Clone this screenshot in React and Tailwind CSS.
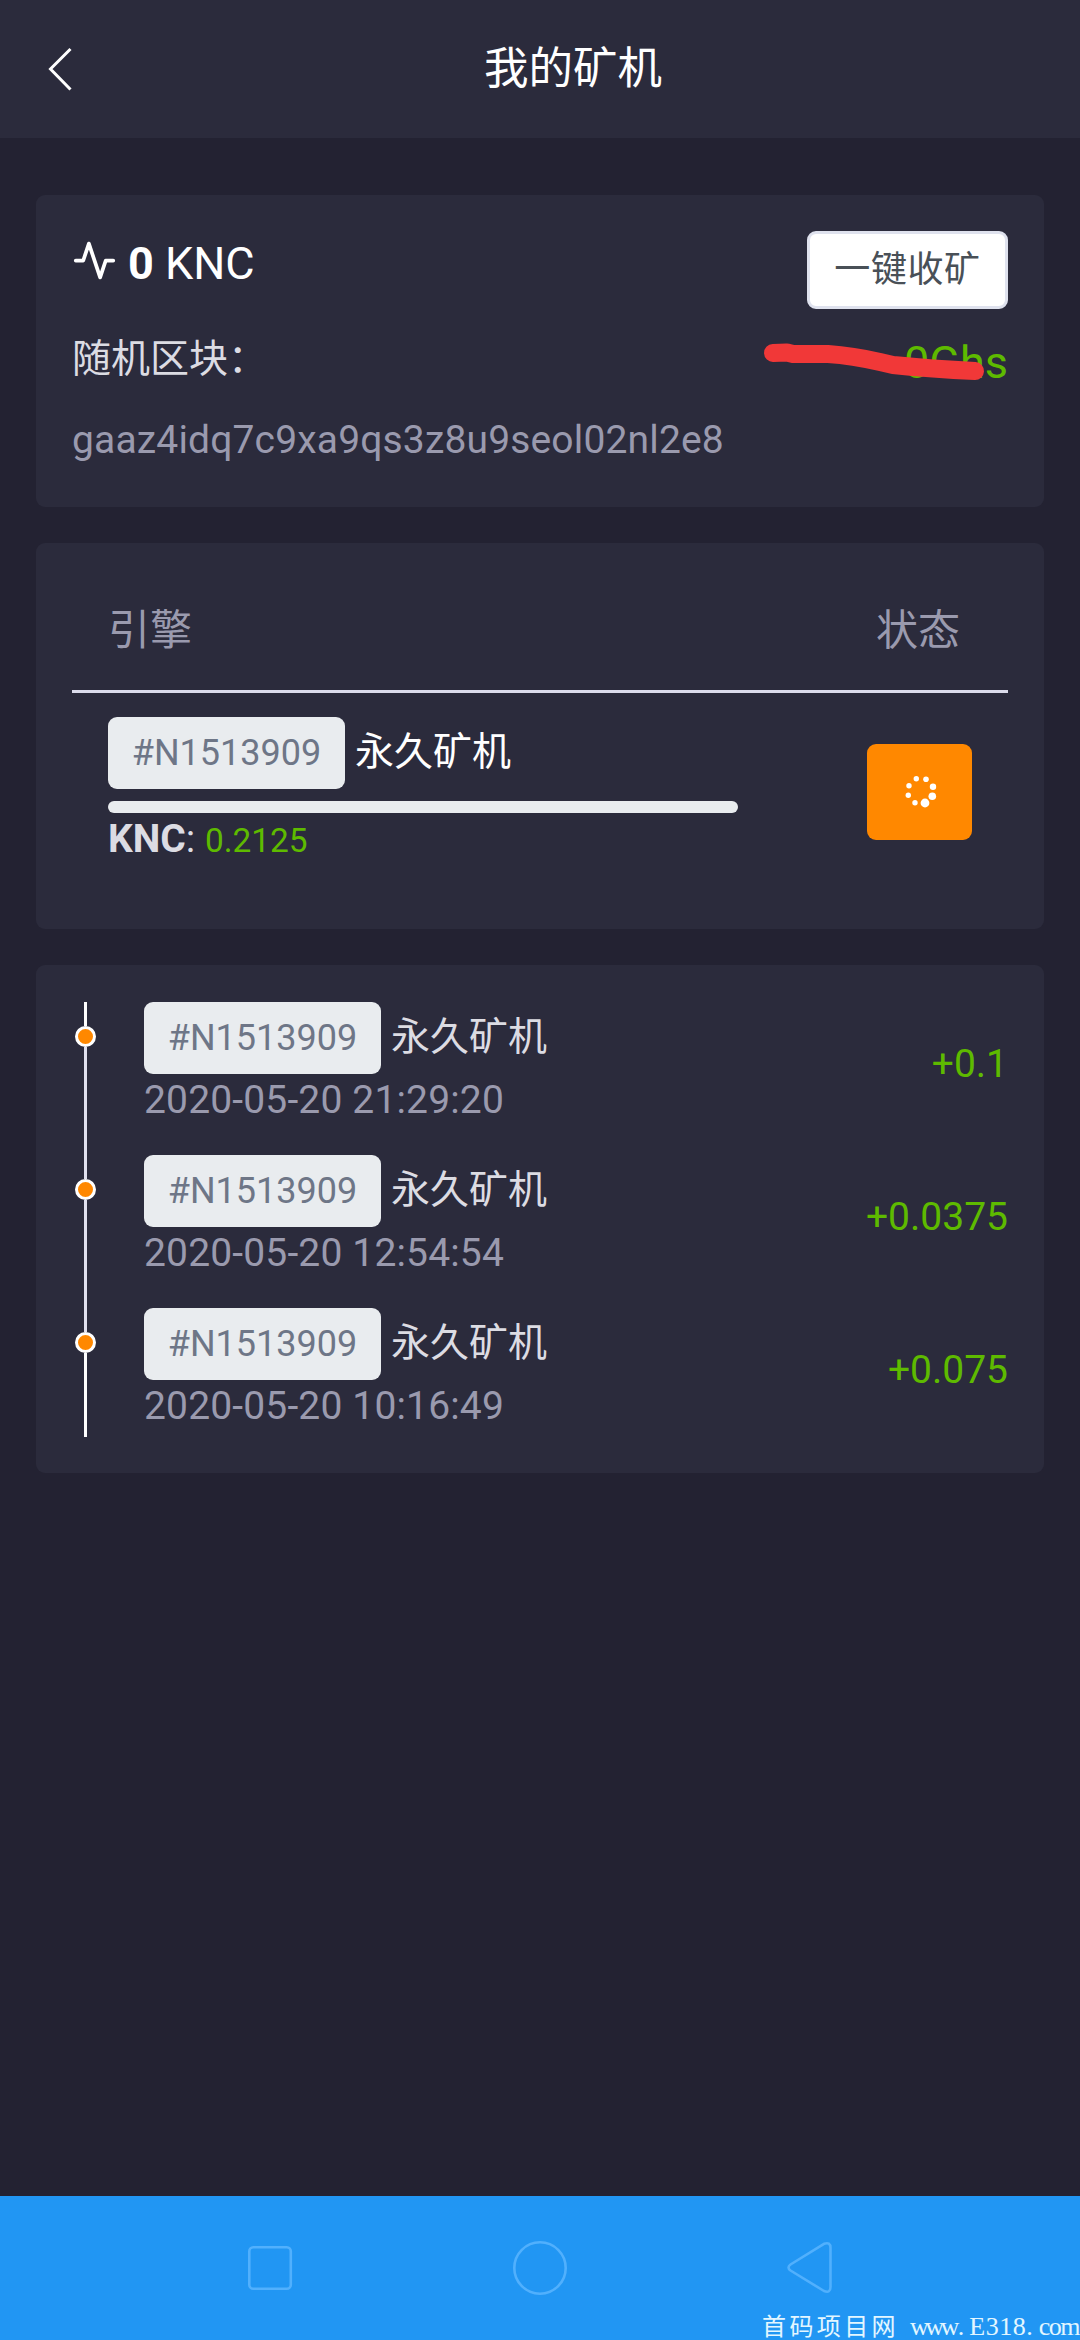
const records = [
  { time: '2020-05-20 21:29:20', amount: '+0.1' },
  { time: '2020-05-20 12:54:54', amount: '+0.0375' },
  { time: '2020-05-20 10:16:49', amount: '+0.075' },
];

const spinnerDots = [
  [16.3, 8.7, 2.7],
  [26, 9.3, 2.8],
  [33, 16.7, 3.2],
  [32.3, 26.3, 3.8],
  [25, 33, 4.4],
  [15, 32.7, 2.7],
  [8.3, 25.3, 2.7],
  [9, 15.7, 2.7],
];

function Machine({ className }) {
  return (
    <div className="flex h-[72px] items-center">
      <span className="flex h-[72px] w-[237px] items-center justify-center rounded-[9px] bg-[#e9ecef] text-[36px] leading-[72px] text-[#6e7687]">
        #N1513909
      </span>
      <span className={className}>永久矿机</span>
    </div>
  );
}

function Header() {
  return (
    <header className="flex h-[138px] items-center bg-[#2b2b3c] pb-[3px]">
      <div className="w-[160px] pt-[3px] pl-[45px]">
        <svg width="30" height="48" viewBox="0 0 30 48" fill="none" stroke="#fff" strokeWidth="3">
          <path d="M25.5 4 5.5 24l20 20.500" />
        </svg>
      </div>
      <h1 className="mr-[160px] flex-1 pt-[2px] pl-[66px] text-center text-[44.5px] leading-[64px] text-white">我的矿机</h1>
    </header>
  );
}

function Summary() {
  return (
    <section className="h-[312px] rounded-[9px] bg-[#2b2b3c] px-[36px] pt-[36px]">
      <div className="flex h-[78px] items-start justify-between">
        <div className="flex h-[66px] items-center text-[45px] leading-[66px] text-white">
          <svg className="mb-[8px]" width="45" height="45" viewBox="0 0 24 24" fill="none" stroke="currentColor" strokeWidth="2" strokeLinecap="round" strokeLinejoin="round">
            <path d="M22 12h-4l-3 9L9 3l-3 9H2" />
          </svg>
          <span className="ml-[11px]">
            <b className="font-bold">0</b> KNC
          </span>
        </div>
        <button className="h-[78px] w-[201px] rounded-[9px] border-[3px] border-[#dfe2ee] bg-white pb-[1px] text-[36px] leading-[60px] tracking-[0.6px] text-[#495057]">
          一键收矿
        </button>
      </div>
      <div className="relative mt-[20px] flex h-[59px] justify-between">
        <span className="text-[39px] leading-[60px] text-[#dcdce3]">随机区块：</span>
        <span className="pt-[4px] text-[45px] leading-[59px] text-[#5eba00]">0Ghs</span>
        <svg className="absolute top-[8px] right-[16px]" width="240" height="60" viewBox="0 0 240 60" fill="none" stroke="#f13838" strokeWidth="18" strokeLinecap="round" strokeLinejoin="round">
          <path d="M21 16 35 15.500 41 17 76 17C98 18.500 115 22 128 25L141 28Q180 32 223 34" />
        </svg>
      </div>
      <div className="mt-[23px] text-[39px] leading-[58px] tracking-[0.16px] text-[#9a9aae]">gaaz4idq7c9xa9qs3z8u9seol02nl2e8</div>
    </section>
  );
}

function Engine() {
  return (
    <section className="mt-[36px] h-[386px] rounded-[9px] bg-[#2b2b3c] px-[36px] pt-[36px]">
      <div className="flex h-[114px] items-center justify-between border-b-[3px] border-[#dcdcec] pr-[48px] pb-[8px] pl-[36px] text-[42px] leading-[60px] text-[#9a9aae]">
        <span>引擎</span>
        <span>状态</span>
      </div>
      <div className="flex justify-between px-[36px] pt-[24px]">
        <div className="w-[630px]">
          <Machine className="ml-[10px] pb-[3px] text-[39px] leading-[60px] text-white" />
          <div className="mt-[12px] h-[12px] rounded-full bg-[#e9ecef]" />
          <div className="text-[39px] leading-[52px] text-[#dcdce3]">
            <b className="font-bold">KNC</b>: <span className="text-[33.4px] text-[#5eba00]">0.2125</span>
          </div>
        </div>
        <button className="mt-[27px] flex h-[96px] w-[105px] items-center justify-center rounded-[9px] bg-[#ff8800]">
          <svg className="mb-[2px] ml-[3px]" width="42" height="42" viewBox="0 0 42 42" fill="#fff">
            {spinnerDots.map(([x, y, r]) => (
              <circle key={`${x}-${y}`} cx={x} cy={y} r={r} />
            ))}
          </svg>
        </button>
      </div>
    </section>
  );
}

function History() {
  return (
    <section className="mt-[36px] h-[508px] rounded-[9px] bg-[#2b2b3c] px-[36px] pt-[37px]">
      {records.map(({ time, amount }, i) => (
        <div key={time} className="flex h-[153px] last:h-[129px]">
          <div className="flex w-[27px] flex-col items-center">
            <div className={i === 0 ? 'h-[24px] w-[3px] bg-white' : 'h-[24px] w-[3px] bg-[#e1e1ef]'} />
            <div className="h-[21px] w-[21px] rounded-full border-[3px] border-white bg-[#ff8800]" />
            <div className={i === 2 ? 'w-[3px] flex-1 bg-white' : 'w-[3px] flex-1 bg-[#e1e1ef]'} />
          </div>
          <div className="ml-[45px] flex-1">
            <Machine className="ml-[10px] pb-[3px] text-[39px] leading-[60px] text-[#dcdce3]" />
            <div className="text-[39px] leading-[52px] tracking-[0.16px] text-[#9a9aae]">{time}</div>
          </div>
          <div className="h-[124px] text-[39px] leading-[124px] text-[#5eba00]">{amount}</div>
        </div>
      ))}
    </section>
  );
}

function NavBar() {
  return (
    <footer className="relative flex h-[144px] items-center justify-center gap-[210px] bg-[#2196f3]">
      <svg width="60" height="60" viewBox="0 0 60 60" fill="none" stroke="#51b0fd" strokeWidth="2.6">
        <rect x="9.300" y="9.300" width="41.500" height="41.500" rx="4" />
      </svg>
      <svg width="60" height="60" viewBox="0 0 60 60" fill="none" stroke="#51b0fd" strokeWidth="2.6">
        <circle cx="30" cy="30" r="25.700" />
      </svg>
      <svg width="60" height="60" viewBox="0 0 60 60" fill="none" stroke="#51b0fd" strokeWidth="2.6" strokeLinejoin="round">
        <path d="M10.500 26.500 44 5.800Q50.500 3.500 50.500 10V49Q50.500 55.500 44 53L10.500 32.500Q6.500 29.500 10.500 26.500Z" />
      </svg>
      <div className="absolute right-0 bottom-0 flex h-[26px] w-[318px] items-center whitespace-nowrap leading-[26px] text-[#e3f6ff]">
        <span className="w-[148px] pb-[4px] font-['Noto_Sans_CJK_SC',sans-serif] text-[24px] tracking-[3.400px]">首码项目网</span>
        <span className="font-['Liberation_Serif',serif] text-[26px]">
          <span className="tracking-[-3.5px]">www</span>
          <span className="pl-[2px] tracking-[5px]">.</span>
          <span className="tracking-[0.5px]">E318</span>
          <span className="tracking-[6px]">.</span>
          <span className="tracking-[-1.500px]">com</span>
        </span>
      </div>
    </footer>
  );
}

export default function App() {
  return (
    <div className="flex h-[2340px] w-[1080px] flex-col overflow-hidden bg-[#232232] font-[Roboto,'Noto_Sans_CJK_SC',sans-serif]">
      <Header />
      <main className="flex-1 px-[36px] pt-[57px]">
        <Summary />
        <Engine />
        <History />
      </main>
      <NavBar />
    </div>
  );
}
